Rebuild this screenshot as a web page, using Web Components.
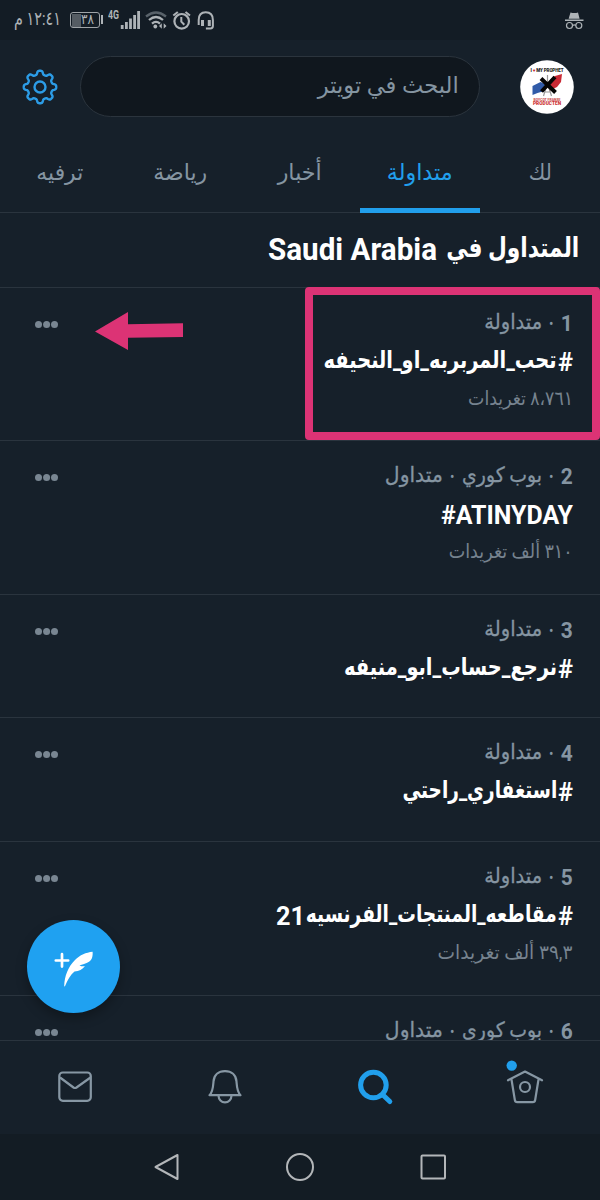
<!DOCTYPE html>
<html lang="ar" dir="rtl">
<head>
<meta charset="utf-8">
<title>Trends</title>
<style>
  body {
    margin: 0;
    width: 600px;
    height: 1200px;
    overflow: hidden;
    background: #16202a;
    color: #8595a2;
    font-family: Roboto, "DejaVu Sans", sans-serif;
  }
</style>
</head>
<body>
<trends-app></trends-app>

<script>
// one run of text squeezed or stretched to a fixed width
class FitText extends HTMLElement {
  connectedCallback() {
    if (!this.shadowRoot) {
      this.attachShadow({ mode: "open" }).innerHTML = `
      <style>
        :host { display: inline-block; white-space: nowrap; flex: none; }
        span { display: inline-block; transform-origin: 100% 50%; }
        :host([dir="ltr"]) span { transform-origin: 0 50%; }
      </style>
      <span><slot></slot></span>`;
    }
    const span = this.shadowRoot.querySelector("span");
    const width = Number(this.getAttribute("w"));
    this.style.width = width + "px";
    const natural = span.getBoundingClientRect().width;
    if (natural) span.style.transform = `scaleX(${width / natural})`;
  }
}

class StatusBar extends HTMLElement {
  constructor() {
    super();
    this.attachShadow({ mode: "open" }).innerHTML = `
    <style>
      :host {
        display: flex;
        direction: ltr;
        justify-content: space-between;
        box-sizing: border-box;
        height: 40px;
        padding: 0 16px 0 14px;
        background: #131c25;
        color: #aeb3b7;
      }
      .left { display: flex; }
      .time { direction: rtl; font-size: 19px; line-height: 37px; margin-right: 8px; }
      .battery {
        box-sizing: border-box;
        width: 30px;
        height: 16px;
        margin: 12px 8px 0 1px;
        border: 1.4px solid #9fa4a8;
        border-radius: 3px;
        background: linear-gradient(90deg, #555c63 9px, transparent 9px) 1px 1px no-repeat;
        font-size: 14px;
        line-height: 13px;
        text-align: center;
        position: relative;
      }
      .battery::after {
        content: "";
        position: absolute;
        left: 30px;
        top: 2px;
        width: 2px;
        height: 9px;
        background: #aeb3b7;
      }
      .net { font-size: 12px; line-height: 30px; font-weight: 700; direction: rtl; height: 20px; margin-right: 1px; }
      svg { display: block; }
    </style>
    <div class="left">
      <fit-text class="time" w="47">١٢:٤١ م</fit-text>
      <div class="battery"><fit-text w="13">٣٨</fit-text></div>
      <fit-text class="net" w="11">4G</fit-text>
      <svg width="94" height="40" viewBox="119 0 94 40" fill="none" stroke="#aeb3b7">
        <path stroke-width="2.8" d="M121.2 29v-4M125.400 29v-7M129.500 29V18.500M133.600 29V15M137.600 29V11"/>
        <path stroke="#59626a" stroke-width="2.300" d="M145 16.500q10-8 20 0"/>
        <path stroke-width="2.300" d="M148 20q7-6 14 0M151 23.600q4-3.500 8 0"/>
        <circle cx="154.300" cy="26.500" r="1.900" fill="#aeb3b7" stroke="none"/>
        <path fill="#aeb3b7" stroke="none" d="M158 26l2.800-2.800v5.600zM165.500 26l-2.800-2.800v5.600z"/>
        <circle cx="180.700" cy="21.300" r="7.300" stroke-width="2.200"/>
        <path stroke-width="2" d="M180.300 17v4.700l3 3M172.300 15.600l4.500-3.700M189 15.600l-4.500-3.700"/>
        <path stroke-width="2" d="M197.700 25v-5q0-7.700 7-7.700 7.200 0 7.200 7.700v6q0 2.400-2.500 2.400h-4.500"/>
        <path stroke-width="3" d="M201.500 20v6M208.300 20v6"/>
      </svg>
    </div>
    <svg width="20" height="40" viewBox="564 0 20 40">
      <path fill="#aeb3b7" d="M570.500 12.500q4 1 7.500 0l1.600 6.200h-11zM565 19.500h18.500v1.400H565z"/>
      <path fill="none" stroke="#aeb3b7" stroke-width="1.200" d="M572.500 25.400q1.800-1 3.500 0"/>
      <circle cx="569.500" cy="25.500" r="3" fill="none" stroke="#aeb3b7" stroke-width="1.200"/>
      <circle cx="578.800" cy="25.500" r="3" fill="none" stroke="#aeb3b7" stroke-width="1.200"/>
    </svg>`;
  }
}

class SearchHeader extends HTMLElement {
  constructor() {
    super();
    this.attachShadow({ mode: "open" }).innerHTML = `
    <style>
      :host {
        display: flex;
        align-items: center;
        box-sizing: border-box;
        height: 93px;
        padding: 0 26px 0 22px;
      }
      .box {
        box-sizing: border-box;
        width: 400px;
        height: 61px;
        margin: 0 40px 0 22px;
        padding-right: 20px;
        border: 1px solid #2b343d;
        border-radius: 31px;
        background: #10171e;
        font-size: 23px;
        line-height: 57px;
      }
      svg { display: block; }
    </style>
    <svg width="54" height="54" viewBox="0 0 54 54">
      <circle cx="27" cy="27" r="26.800" fill="#fff"/>
      <path fill="#c92a35" d="M30 20l5-4 7-2-1 8-4 5-8 4z"/>
      <path fill="#315ba8" d="M12.500 26l8-4 7 3-3 6-7 2-5 2z"/>
      <path fill="none" stroke="#999" stroke-width="1.200" d="M27.500 15v8l-4 13M27.500 23l4 13M25 32h5"/>
      <path stroke="#050505" stroke-width="4" d="M21 18.500l14.500 14M35 17L21.500 31.500"/>
      <g font-family="Roboto, sans-serif" font-weight="900" text-anchor="middle" direction="ltr">
        <text x="27" y="12" font-size="4.500" fill="#222" textLength="33">I <tspan fill="#c92a35">♥</tspan> MY PROPHET</text>
        <text x="27" y="40.500" font-size="4.400" fill="#c55" textLength="27" lengthAdjust="spacingAndGlyphs">BOYCOT FRANSE</text>
        <text x="27" y="45" font-size="5.200" fill="#c33" textLength="28" lengthAdjust="spacingAndGlyphs">PRODUCTEN</text>
      </g>
    </svg>
    <div class="box"><fit-text w="141">البحث في تويتر</fit-text></div>
    <svg width="36" height="36" viewBox="-18 -18 36 36" fill="none" stroke="#2c9ce6" stroke-width="2.400" style="margin-right: auto">
      <path class="gear" stroke-linejoin="round"/>
      <circle r="5.500"/>
    </svg>`;
    // eight rounded teeth
    const points = [];
    for (let i = 0; i < 160; i++) {
      const a = (i / 160) * Math.PI * 2;
      const r = 14.4 + 1.9 * Math.tanh(2 * Math.cos(8 * a));
      points.push((r * Math.cos(a)).toFixed(2) + " " + (r * Math.sin(a)).toFixed(2));
    }
    this.shadowRoot.querySelector(".gear").setAttribute("d", "M" + points.join("L") + "z");
  }
}

class TabItem extends HTMLElement {
  constructor() {
    super();
    this.attachShadow({ mode: "open" }).innerHTML = `
    <style>
      :host {
        display: flex;
        justify-content: center;
        box-sizing: border-box;
        width: 120px;
        height: 80px;
        font-size: 22.5px;
        line-height: 79px;
        border-bottom: 5px solid transparent;
      }
      :host([active]) { color: #219fec; border-color: #219fec; }
    </style>
    <slot></slot>`;
  }
}

class TrendRow extends HTMLElement {
  constructor() {
    super();
    this.attachShadow({ mode: "open" }).innerHTML = `
    <style>
      :host {
        display: flex;
        flex: none;
        justify-content: space-between;
        box-sizing: border-box;
        height: var(--h);
        padding: 21px 27px 0 35px;
        border-bottom: 1px solid #2a343e;
      }
      .text { display: flex; flex-direction: column; }
      .text > div { display: flex; }
      .meta { gap: 7px; height: 30px; font-size: 21px; line-height: 26px; -webkit-text-stroke: .3px; }
      .name { gap: 1px; height: 42px; color: #fff; font-size: 24px; line-height: 42px; font-weight: 700; }
      .count { font-size: 19.5px; line-height: 35px; color: #76838f; }
      ::slotted(.num) { font-size: 22px; font-weight: 700; line-height: 29px; -webkit-text-stroke: 0; }
      ::slotted(.latin) { font-size: 25.5px; line-height: 46px; }
      svg { margin-top: 12px; }
    </style>
    <div class="text">
      <div class="meta"><slot name="meta"></slot></div>
      <div class="name"><slot name="name"></slot></div>
      <div class="count"><slot name="count"></slot></div>
    </div>
    <svg width="23" height="8" fill="#798692">
      <circle cx="3.500" cy="3.500" r="3.500"/><circle cx="11.600" cy="3.500" r="3.500"/><circle cx="19.500" cy="3.500" r="3.500"/>
    </svg>`;
  }
}

class ComposeButton extends HTMLElement {
  constructor() {
    super();
    this.attachShadow({ mode: "open" }).innerHTML = `
    <style>
      :host {
        position: absolute;
        left: 27px;
        top: 920px;
        width: 93px;
        height: 93px;
        border-radius: 50%;
        background: #1fa1f1;
        box-shadow: 0 5px 12px rgba(0, 0, 0, .3);
      }
      svg { display: block; }
    </style>
    <svg width="93" height="93" viewBox="27 920 93 93">
      <path fill="none" stroke="#fff" stroke-width="2.700" stroke-linecap="round" d="M55.800 960.500h12.400M62 954.200v12.400"/>
      <path fill="#fff" d="M64.200 986C64.500 976 68 967 75 960 80 955 86 952.500 92.600 951.800 93 956 92 960 89 961.800 86 963.500 82 964.800 79.500 965.400 81.500 966.400 83 966.400 85 966 82.500 969.500 79 971.300 74.500 971.600 70.500 975 67.500 980 65.300 985.600 65 986.500 64.200 986.800 64.200 986z"/>
    </svg>`;
  }
}

class BottomNav extends HTMLElement {
  constructor() {
    super();
    this.attachShadow({ mode: "open" }).innerHTML = `
    <style>
      :host {
        display: grid;
        direction: ltr;
        grid-template-columns: repeat(4, 150px);
        box-sizing: border-box;
        height: 94px;
        padding-top: 16px;
        border-top: 1px solid #2a343e;
        justify-items: center;
      }
      svg { fill: none; stroke: #8797a4; stroke-width: 2.2; stroke-linejoin: round; }
    </style>
    <svg width="50" height="50" viewBox="50 1057 50 50">
      <rect x="59.300" y="1072.500" width="31.500" height="28.300" rx="3.500"/>
      <path d="M60 1077.500l13.500 10q1.500 1 3 0l14-10"/>
    </svg>
    <svg width="50" height="50" viewBox="200 1057 50 50">
      <path d="M209.500 1095.200c3.500-3.500 3.600-8 4-13.700.5-6.500 5-10.300 11.500-10.300s11 3.800 11.500 10.300c.4 5.700.5 10.200 4 13.700z"/>
      <path d="M218.500 1095.500c0 4 3 6.800 6.500 6.800s6.500-2.800 6.500-6.800"/>
    </svg>
    <svg width="50" height="50" viewBox="350 1057 50 50">
      <circle cx="373.400" cy="1085" r="12.800" stroke="#219fec" stroke-width="5"/>
      <path stroke="#219fec" stroke-width="5" stroke-linecap="round" d="M383.500 1095.500l6.300 6"/>
    </svg>
    <svg width="50" height="50" viewBox="500 1057 50 50">
      <path stroke-linecap="round" d="M508 1080.300l17-8.800 17 8.800M511.500 1079.500l3.300 20.300q.3 2.300 2.500 2.300h15.400q2.200 0 2.500-2.300l3.300-20.300"/>
      <circle cx="525" cy="1087" r="5"/>
      <circle cx="511.700" cy="1065.600" r="5.200" fill="#219fec" stroke="none"/>
    </svg>`;
  }
}

class SystemKeys extends HTMLElement {
  constructor() {
    super();
    this.attachShadow({ mode: "open" }).innerHTML = `
    <style>
      :host {
        display: flex;
        direction: ltr;
        justify-content: center;
        gap: 93px;
        box-sizing: border-box;
        height: 66px;
        padding-top: 13px;
        background: #131c24;
      }
      svg { fill: none; stroke: #b3b6b9; stroke-width: 2; stroke-linejoin: round; }
    </style>
    <svg width="40" height="40"><path d="M8.500 20L30.500 8v24z"/></svg>
    <svg width="40" height="40"><circle cx="20" cy="20" r="13"/></svg>
    <svg width="40" height="40"><rect x="8.500" y="8.500" width="23.500" height="23" rx="1"/></svg>`;
  }
}

// hand-drawn style marks laid over the first trend
class MarkUp extends HTMLElement {
  constructor() {
    super();
    this.attachShadow({ mode: "open" }).innerHTML = `
    <style>
      :host { position: absolute; left: 0; top: 287px; width: 600px; height: 153px; }
      .frame {
        position: absolute;
        box-sizing: border-box;
        left: 305px;
        top: 0;
        width: 295px;
        height: 153px;
        border: 8px solid #dc3375;
        border-radius: 4px;
      }
      svg { position: absolute; left: 95px; top: 24px; }
    </style>
    <div class="frame"></div>
    <svg width="88" height="40" fill="#dc3375"><path d="M0 20.500L33 1v12.300l55-1V26l-55 .7V39z"/></svg>`;
  }
}

class TrendsApp extends HTMLElement {
  constructor() {
    super();
    this.attachShadow({ mode: "open" }).innerHTML = `
    <style>
      :host { display: flex; flex-direction: column; position: relative; width: 600px; height: 1200px; }
      status-bar, search-header, nav, h1, bottom-nav, system-keys { flex: none; }
      nav { display: flex; height: 80px; box-shadow: inset 0 -1px #2a343e; }
      h1 {
        display: flex;
        gap: 9px;
        box-sizing: border-box;
        height: 75px;
        margin: 0;
        padding-right: 21px;
        border-bottom: 1px solid #2a343e;
        color: #fff;
        font-size: 31px;
        line-height: 74px;
      }
      h1 .ar { line-height: 70px; font-size: 27px; }
      main { display: flex; flex-direction: column; height: 752px; overflow: hidden; }
    </style>
    <status-bar></status-bar>
    <search-header></search-header>
    <nav>
      <tab-item><fit-text w="23">لك</fit-text></tab-item>
      <tab-item active><fit-text w="66">متداولة</fit-text></tab-item>
      <tab-item><fit-text w="44">أخبار</fit-text></tab-item>
      <tab-item><fit-text w="54">رياضة</fit-text></tab-item>
      <tab-item><fit-text w="47">ترفيه</fit-text></tab-item>
    </nav>
    <h1><fit-text class="ar" w="133">المتداول في</fit-text><fit-text dir="ltr" w="169">Saudi Arabia</fit-text></h1>
    <main></main>
    <bottom-nav></bottom-nav>
    <system-keys></system-keys>
    <compose-button></compose-button>
    <mark-up></mark-up>`;

    const local = [["متداولة", 58]];
    const kpop = [["بوب كوري", 80], ["متداول", 58]];
    const trends = [
      { h: 153, meta: local, name: [["#", 15], ["تحب_المربربه_او_النحيفه", 233]], count: ["٨،٧٦١ تغريدات", 105] },
      { h: 154, meta: kpop, name: [["#ATINYDAY", 132]], count: ["٣١٠ ألف تغريدات", 124] },
      { h: 123, meta: local, name: [["#", 15], ["نرجع_حساب_ابو_منيفه", 213]] },
      { h: 124, meta: local, name: [["#", 15], ["استغفاري_راحتي", 155]] },
      { h: 154, meta: local, name: [["#", 15], ["مقاطعه_المنتجات_الفرنسيه", 251], ["21", 29]], count: ["٣٩,٣ ألف تغريدات", 135] },
      { h: 153, meta: kpop, name: [] },
    ];
    const run = (slot, [text, w], kind = "") =>
      `<fit-text slot="${slot}" w="${w}" class="${kind}"${kind === "latin" ? ' dir="ltr"' : ""}>${text}</fit-text>`;
    this.shadowRoot.querySelector("main").innerHTML = trends
      .map(
        (t, i) => `<trend-row style="--h: ${t.h}px">
          ${run("meta", [i + 1, 12], "num")}
          ${t.meta.map((m) => run("meta", ["·", 5], "num") + run("meta", m)).join("")}
          ${t.name.map((n) => run("name", n, /[#\d]/.test(n[0]) ? "latin" : "")).join("")}
          ${t.count ? run("count", t.count) : ""}
        </trend-row>`
      )
      .join("");
  }
}

customElements.define("fit-text", FitText);
customElements.define("status-bar", StatusBar);
customElements.define("search-header", SearchHeader);
customElements.define("tab-item", TabItem);
customElements.define("trend-row", TrendRow);
customElements.define("compose-button", ComposeButton);
customElements.define("bottom-nav", BottomNav);
customElements.define("system-keys", SystemKeys);
customElements.define("mark-up", MarkUp);
customElements.define("trends-app", TrendsApp);
</script>
</body>
</html>
